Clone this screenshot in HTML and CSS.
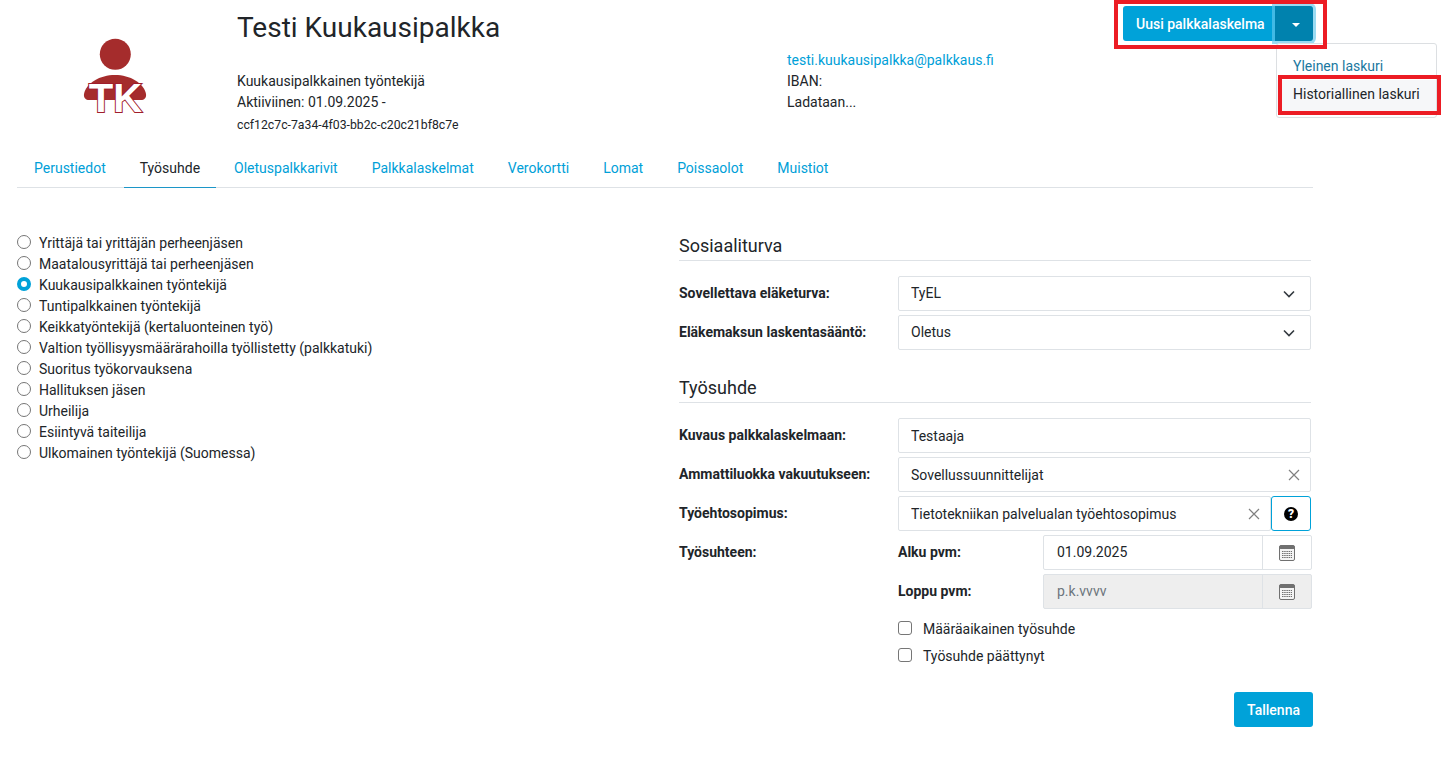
FILE: index.html
```html
<!DOCTYPE html>
<html>
<head>
    <title>Testi Kuukausipalkka</title>
    <link rel="stylesheet" href="styles.css">
</head>
<body>
    <div class="container">
        <div class="profile">
            <div class="avatar">
                <svg width="110" height="100" viewBox="60 30 110 100">
                    <circle cx="115.3" cy="54.3" r="15.5" fill="#a52c2c"/>
                    <path d="M84 94C86 83 100 75 115 75C130 75 144 83 146 94C146.500 98 144 100 141 100L89 100C86 100 83.500 98 84 94Z" fill="#a52c2c"/>
                    <text x="115.500" y="111.500" class="avatar-text" text-anchor="middle">TK</text>
                </svg>
            </div>
            <div class="person">
                <h1>Testi Kuukausipalkka</h1>
                <div class="person-lines">
                    <div>Kuukausipalkkainen työntekijä</div>
                    <div>Aktiiviinen: 01.09.2025 -</div>
                    <div class="small">ccf12c7c-7a34-4f03-bb2c-c20c21bf8c7e</div>
                </div>
            </div>
            <div class="contact">
                <div><a href="#">testi.kuukausipalkka@palkkaus.fi</a></div>
                <div>IBAN:</div>
                <div>Ladataan...</div>
            </div>
            <div class="actions">
                <button class="btn btn-main">Uusi palkkalaskelma</button>
                <button class="btn btn-split"><span class="caret"></span></button>
                <div class="menu">
                    <a href="#" class="menu-item">Yleinen laskuri</a>
                    <a href="#" class="menu-item menu-hover">Historiallinen laskuri</a>
                </div>
                <div class="mark mark-button"></div>
                <div class="mark mark-item"></div>
            </div>
        </div>

        <div class="tabs">
            <a href="#">Perustiedot</a>
            <a href="#" class="active">Työsuhde</a>
            <a href="#">Oletuspalkkarivit</a>
            <a href="#">Palkkalaskelmat</a>
            <a href="#">Verokortti</a>
            <a href="#">Lomat</a>
            <a href="#">Poissaolot</a>
            <a href="#">Muistiot</a>
        </div>

        <div class="content">
            <div class="types">
                <label class="type"><input type="radio" name="type"><span>Yrittäjä tai yrittäjän perheenjäsen</span></label>
                <label class="type"><input type="radio" name="type"><span>Maatalousyrittäjä tai perheenjäsen</span></label>
                <label class="type"><input type="radio" name="type" checked><span>Kuukausipalkkainen työntekijä</span></label>
                <label class="type"><input type="radio" name="type"><span>Tuntipalkkainen työntekijä</span></label>
                <label class="type"><input type="radio" name="type"><span>Keikkatyöntekijä (kertaluonteinen työ)</span></label>
                <label class="type"><input type="radio" name="type"><span>Valtion työllisyysmäärärahoilla työllistetty (palkkatuki)</span></label>
                <label class="type"><input type="radio" name="type"><span>Suoritus työkorvauksena</span></label>
                <label class="type"><input type="radio" name="type"><span>Hallituksen jäsen</span></label>
                <label class="type"><input type="radio" name="type"><span>Urheilija</span></label>
                <label class="type"><input type="radio" name="type"><span>Esiintyvä taiteilija</span></label>
                <label class="type"><input type="radio" name="type"><span>Ulkomainen työntekijä (Suomessa)</span></label>
            </div>

            <div class="details">
                <h2>Sosiaaliturva</h2>
                <div class="row">
                    <label>Sovellettava eläketurva:</label>
                    <div class="field">
                        <select><option>TyEL</option></select>
                        <svg class="chevron" width="12" height="8" viewBox="0 0 12 8"><path d="M1 1.500L6 6.500L11 1.500" fill="none" stroke="#343a40" stroke-width="1.600"/></svg>
                    </div>
                </div>
                <div class="row">
                    <label>Eläkemaksun laskentasääntö:</label>
                    <div class="field">
                        <select><option>Oletus</option></select>
                        <svg class="chevron" width="12" height="8" viewBox="0 0 12 8"><path d="M1 1.500L6 6.500L11 1.500" fill="none" stroke="#343a40" stroke-width="1.600"/></svg>
                    </div>
                </div>

                <h2 class="second">Työsuhde</h2>
                <div class="row">
                    <label>Kuvaus palkkalaskelmaan:</label>
                    <div class="field"><input type="text" value="Testaaja"></div>
                </div>
                <div class="row">
                    <label>Ammattiluokka vakuutukseen:</label>
                    <div class="field">
                        <input type="text" value="Sovellussuunnittelijat">
                        <svg class="clear" width="12" height="12" viewBox="0 0 12 12"><path d="M1 1L11 11M11 1L1 11" stroke="#808080" stroke-width="1.200"/></svg>
                    </div>
                </div>
                <div class="row">
                    <label>Työehtosopimus:</label>
                    <div class="field">
                        <input type="text" value="Tietotekniikan palvelualan työehtosopimus">
                        <svg class="clear" width="12" height="12" viewBox="0 0 12 12"><path d="M1 1L11 11M11 1L1 11" stroke="#808080" stroke-width="1.200"/></svg>
                    </div>
                    <button class="help">
                        <svg width="14" height="14" viewBox="0 0 14 14">
                            <circle cx="7" cy="7" r="7" fill="#000"/>
                            <text x="7" y="11.300" class="help-text" text-anchor="middle">?</text>
                        </svg>
                    </button>
                </div>
                <div class="row row-dates">
                    <label>Työsuhteen:</label>
                    <div class="dates">
                        <div class="date-row">
                            <label>Alku pvm:</label>
                            <div class="field date">
                                <input type="text" value="01.09.2025">
                                <span class="addon">
                                    <svg width="16" height="16" viewBox="0 0 16 16"><use href="#calendar"/></svg>
                                </span>
                            </div>
                        </div>
                        <div class="date-row">
                            <label>Loppu pvm:</label>
                            <div class="field date disabled">
                                <input type="text" placeholder="p.k.vvvv" disabled>
                                <span class="addon">
                                    <svg width="16" height="16" viewBox="0 0 16 16"><use href="#calendar"/></svg>
                                </span>
                            </div>
                        </div>
                        <label class="check"><input type="checkbox"><span>Määräaikainen työsuhde</span></label>
                        <label class="check"><input type="checkbox"><span>Työsuhde päättynyt</span></label>
                    </div>
                </div>
                <div class="save-row">
                    <button class="btn btn-save">Tallenna</button>
                </div>
            </div>
        </div>
    </div>

    <svg width="0" height="0" class="defs">
        <symbol id="calendar" viewBox="0 0 16 16">
            <rect x="0.500" y="0.500" width="15" height="15" rx="1.500" fill="#f4f4f4" stroke="#707070"/>
            <rect x="0.500" y="0.500" width="15" height="3.500" rx="1" fill="#707070"/>
            <path d="M3 6.500H13M3 8.500H13M3 10.500H13M3 12.500H13" stroke="#707070" stroke-dasharray="1.500 0.700"/>
        </symbol>
    </svg>
</body>
</html>
```

FILE: styles.css
```css
body {
    font-family: Roboto, sans-serif;
    font-size: 14px;
    line-height: 21px;
    color: #212529;
    background-color: white;
    margin: 0;
}

a {
    color: #00a0d8;
    text-decoration: none;
}

.defs {
    display: block;
    height: 0;
}

.container {
    width: 1296px;
    margin-left: 17px;
}

/* Header */
.profile {
    display: flex;
    height: 152px;
}

.avatar {
    width: 220px;
    padding-top: 30px;
    padding-left: 43px;
    box-sizing: border-box;
}

.avatar-text {
    font-family: "Liberation Sans", sans-serif;
    font-weight: bold;
    font-size: 40px;
    fill: white;
    stroke: #a01e2c;
    stroke-width: 2;
    paint-order: stroke;
}

.person {
    width: 550px;
}

h1 {
    font-size: 28px;
    font-weight: 400;
    line-height: 34px;
    margin: 11px 0 0 0;
}

.person-lines {
    margin-top: 26px;
}

.small {
    font-size: 12.25px;
    line-height: 22px;
    padding-top: 1px;
}

.contact {
    padding-top: 50px;
    width: 336px;
}

.actions {
    position: relative;
    display: flex;
    align-items: flex-start;
    padding-top: 6px;
}

.btn {
    background-color: #00a2d9;
    color: white;
    font-family: inherit;
    font-size: 14px;
    font-weight: 500;
    height: 35px;
    padding: 0 13px;
    border: none;
    border-radius: 3px 0 0 3px;
    cursor: pointer;
}

.btn-main {
    width: 152px;
    padding: 0 0 0 13px;
    text-align: left;
}

.btn-split {
    width: 38px;
    padding: 0 0 0 4px;
    background-color: #0082ae;
    border-radius: 0 3px 3px 0;
    box-shadow: 0 0 0 3px rgba(100, 200, 235, 0.65);
}

.caret {
    display: inline-block;
    border-top: 4px solid white;
    border-left: 4px solid transparent;
    border-right: 4px solid transparent;
    vertical-align: middle;
}

.menu {
    position: absolute;
    top: 43px;
    left: 153px;
    width: 161px;
    height: 75px;
    box-sizing: border-box;
    padding-top: 9px;
    background-color: white;
    border: 1px solid #dcdfe2;
    border-radius: 3px;
}

.menu-item {
    display: block;
    padding: 3px 16px;
    color: #1a78a0;
}

.menu-hover {
    padding-top: 4px;
    padding-bottom: 7px;
    color: #212529;
    background-color: #f6f7f9;
}

.mark {
    position: absolute;
    box-sizing: border-box;
    border: 4px solid #ec1c24;
}

.mark-button {
    top: 0;
    left: -9px;
    width: 213px;
    height: 49px;
}

.mark-item {
    top: 75px;
    left: 155px;
    width: 163px;
    height: 40px;
}

/* Tabs */
.tabs {
    display: flex;
    height: 35px;
    gap: 0;
    border-bottom: 1px solid #dee2e6;
}

.tabs a {
    padding: 6px 17px 0 17px;
    margin-bottom: -1px;
}

.tabs a.active {
    color: #212529;
    border-bottom: 1px solid #1c96c8;
    padding: 6px 16px 0 16px;
    margin-left: 1px;
    margin-right: 1px;
}

/* Main columns */
.content {
    display: flex;
    padding-top: 45px;
}

.types {
    width: 662px;
    padding-top: 0;
}

.type {
    display: flex;
    align-items: center;
    height: 21px;
}

.type input {
    width: 14px;
    height: 14px;
    margin: 0 8px 3px 0;
    appearance: none;
    border: 1px solid #767676;
    border-radius: 50%;
    background-color: white;
}

.type input:checked {
    border: 4px solid #00a2d9;
}

.details {
    width: 634px;
}

h2 {
    font-size: 18px;
    font-weight: 400;
    line-height: 26px;
    margin: 0 2px 15px 0;
    padding-bottom: 1px;
    border-bottom: 1px solid #dee2e6;
}

h2.second {
    margin-top: 25px;
}

.row {
    display: flex;
    margin-bottom: 4px;
    margin-right: 2px;
}

.row > label {
    width: 219px;
    flex: none;
    font-weight: 700;
    line-height: 35px;
}

.field {
    flex: 1;
    min-width: 0;
    display: flex;
    align-items: center;
    height: 35px;
    box-sizing: border-box;
    border: 1px solid #dee2e6;
    border-radius: 2px;
}

.field input,
.field select {
    flex: 1;
    min-width: 0;
    border: none;
    outline: none;
    appearance: none;
    background: transparent;
    font-family: inherit;
    font-size: 14px;
    color: #212529;
    padding: 0 12px;
}

.field select,
.date input {
    padding-bottom: 2px;
}

.date input {
    padding-left: 13px;
}

.chevron {
    margin-right: 15px;
}

.clear {
    margin-right: 10px;
}

.help {
    width: 40px;
    height: 35px;
    padding: 0;
    background-color: white;
    border: 1px solid #00a2d9;
    border-radius: 3px;
    display: flex;
    align-items: center;
    justify-content: center;
}

.help-text {
    font-family: Roboto, sans-serif;
    font-weight: 900;
    font-size: 12px;
    fill: white;
}

.dates {
    flex: 1;
    margin-right: -1px;
}

.date-row {
    display: flex;
    margin-bottom: 4px;
}

.date-row label {
    width: 145px;
    flex: none;
    font-weight: 700;
    line-height: 35px;
}

.addon {
    width: 48px;
    height: 33px;
    border-left: 1px solid #dee2e6;
    display: flex;
    align-items: center;
    justify-content: center;
    flex: none;
}

.addon svg {
    display: block;
}

.disabled {
    background-color: #eeeeee;
}

.disabled input::placeholder {
    color: #6c757d;
}

.check {
    display: flex;
    align-items: center;
    height: 27px;
}

.check input {
    width: 14px;
    height: 14px;
    margin: 0 11px 4px 0;
    appearance: none;
    background-color: white;
    border: 1px solid #767676;
    border-radius: 3px;
}

.dates .check:first-of-type {
    margin-top: 7px;
}

.save-row {
    display: flex;
    justify-content: flex-end;
    padding-top: 18px;
}

.btn-save {
    width: 79px;
    padding: 0;
    border-radius: 3px;
}
```
